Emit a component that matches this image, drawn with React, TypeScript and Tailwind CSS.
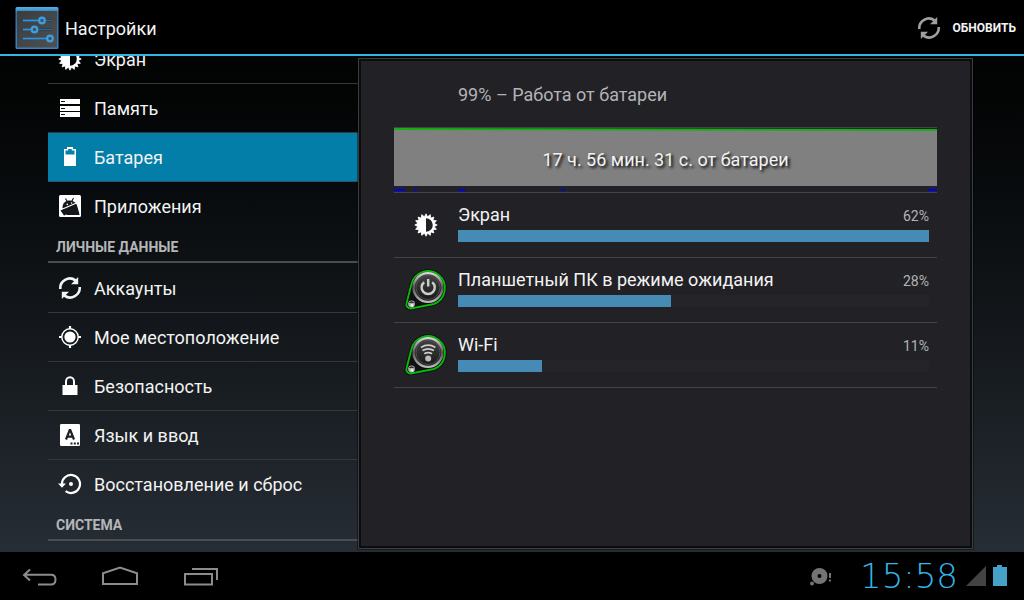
import React from 'react';

type IconProps = { className?: string };

const GEAR_TEETH = Array.from({ length: 16 }, (_, i) => i * 22.5);

const BrightnessIcon: React.FC<IconProps> = ({ className }) => (
    <svg viewBox="0 0 24 24" className={className} fill="none" aria-hidden="true">
        {GEAR_TEETH.map(a => (
            <path key={a} d="M10.6 3.5 L12 0.8 L13.4 3.5 Z" fill="#fff" stroke="#fff" strokeWidth="0.8" transform={`rotate(${a} 12 12)`} />
        ))}
        <circle cx="12" cy="12" r="7.9" stroke="#fff" strokeWidth="2.2" />
        <path d="M12 4 A8 8 0 0 0 12 20 Z" fill="#fff" />
    </svg>
);

const StorageIcon: React.FC<IconProps> = ({ className }) => (
    <svg viewBox="0 0 24 24" className={className} aria-hidden="true">
        {[3, 10, 16].map(y => (
            <g key={y}>
                <rect x="2" y={y} width="20" height="5" fill="#fff" />
                <rect x="3" y={y + 2} width="4" height="1" fill="#111" />
            </g>
        ))}
    </svg>
);

const BatteryIcon: React.FC<IconProps> = ({ className }) => (
    <svg viewBox="0 0 24 24" className={className} aria-hidden="true">
        <path d="M9 2 H15 V4 H18 V21 H6 V4 H9 Z" fill="#fff" />
        <path d="M10.2 4 H13.8 V5.4 H16.5 V9.5 H7.5 V5.4 H10.2 Z" fill="#0480ab" />
    </svg>
);

const AppsIcon: React.FC<IconProps> = ({ className }) => (
    <svg viewBox="0 0 24 24" className={className} fill="none" aria-hidden="true">
        <rect x="1" y="1" width="22" height="22" rx="1.5" fill="#fff" />
        <path d="M4.5 14 C4.5 8.5 8 6.5 11.5 6.5 C15 6.5 18.2 8.5 20 12 L21.5 21 H9 Z" fill="#14161a" />
        <path d="M7.5 4.5 L9.5 8 M15.5 4 L13.7 7.5" stroke="#14161a" strokeWidth="1.1" />
        <path d="M3.5 15.5 L18.5 9 M19 9.5 L22 19" stroke="#fff" strokeWidth="1.2" />
        <path d="M2.5 16.5 L6 21.5 L9.5 20 L6.5 14.8 Z" fill="#14161a" />
        <circle cx="9.3" cy="10.4" r="0.8" fill="#fff" />
        <circle cx="13.6" cy="9" r="0.8" fill="#fff" />
    </svg>
);

const SyncIcon: React.FC<IconProps> = ({ className }) => (
    <svg viewBox="0 0 24 24" className={className} fill="none" aria-hidden="true">
        <path d="M2.3 13 A9.6 9.6 0 0 1 17.5 4.4" stroke="currentColor" strokeWidth="2.6" />
        <path d="M20.2 1 V8.2 H13 Z" fill="currentColor" />
        <path d="M21.7 11 A9.6 9.6 0 0 1 6.5 19.6" stroke="currentColor" strokeWidth="2.6" />
        <path d="M3.8 23 V15.8 H11 Z" fill="currentColor" />
    </svg>
);

const LocationIcon: React.FC<IconProps> = ({ className }) => (
    <svg viewBox="0 0 24 24" className={className} fill="none" aria-hidden="true">
        <circle cx="12" cy="12" r="5.6" fill="#fff" />
        <circle cx="12" cy="12" r="8.2" stroke="#fff" strokeWidth="1.4" />
        <path d="M12 1 V4 M12 20 V23 M1 12 H4 M20 12 H23" stroke="#fff" strokeWidth="2.2" />
    </svg>
);

const LockIcon: React.FC<IconProps> = ({ className }) => (
    <svg viewBox="0 0 24 24" className={className} fill="none" aria-hidden="true">
        <rect x="4.5" y="11" width="15" height="10" fill="#fff" />
        <path d="M8 11.5 V7.5 A4 4.2 0 0 1 16 7.5 V11.5" stroke="#fff" strokeWidth="2" />
    </svg>
);

const LanguageIcon: React.FC<IconProps> = ({ className }) => (
    <svg viewBox="0 0 24 24" className={className} fill="none" aria-hidden="true">
        <rect x="2" y="1" width="20" height="22" rx="1.2" fill="#fff" />
        <path d="M8 16.5 L11.7 7 H12.3 L16 16.5 M9.4 13.6 H14.6" stroke="#1d2024" strokeWidth="2.2" />
        <path d="M12.5 20.5 H14.5 M15.8 20.5 H17.8 M19 20.5 H21" stroke="#1d2024" strokeWidth="1.8" />
    </svg>
);

const RestoreIcon: React.FC<IconProps> = ({ className }) => (
    <svg viewBox="0 0 24 24" className={className} fill="none" aria-hidden="true">
        <path d="M4 12.5 A9 9 0 1 1 7.6 19.2" stroke="#fff" strokeWidth="2.2" />
        <path d="M0 11.4 H8 L4 15.8 Z" fill="#fff" />
        <circle cx="13" cy="12" r="2" fill="#fff" />
    </svg>
);

const SettingsLogo: React.FC<IconProps> = ({ className }) => (
    <svg viewBox="0 0 44 44" className={className} fill="none" aria-hidden="true">
        <defs>
            <linearGradient id="logoFrame" x1="0" y1="0" x2="0" y2="1">
                <stop offset="0" stopColor="#4fb4ea" />
                <stop offset="0.15" stopColor="#3574a5" />
                <stop offset="1" stopColor="#2f86cc" />
            </linearGradient>
            <linearGradient id="logoFace" x1="0" y1="0" x2="1" y2="1">
                <stop offset="0" stopColor="#3a3c3e" />
                <stop offset="1" stopColor="#505050" />
            </linearGradient>
        </defs>
        <rect x="0.5" y="1" width="43" height="42" rx="1.5" fill="url(#logoFrame)" />
        <rect x="2" y="5" width="40" height="36.5" fill="url(#logoFace)" />
        <path d="M8 14.5 H37 M8 23.5 H37 M8 32.5 H37" stroke="#24303a" strokeWidth="2.4" />
        <path d="M8 14.5 H24 M8 23.5 H16 M8 32.5 H32" stroke="#3292dc" strokeWidth="1.8" />
        <path d="M31 14.5 H37 M23 23.5 H37" stroke="#27699c" strokeWidth="1.4" />
        <g fill="#45515b" stroke="#3d9fe0" strokeWidth="2.2">
            <circle cx="27" cy="14.5" r="2.8" />
            <circle cx="19.5" cy="23.5" r="2.8" />
            <circle cx="35" cy="32.5" r="2.8" />
        </g>
    </svg>
);

const Keyring: React.FC<{ children: React.ReactNode }> = ({ children }) => (
    <svg viewBox="0 0 48 48" className="size-12" fill="none" aria-hidden="true">
        <defs>
            <linearGradient id="ringRim" x1="0" y1="0" x2="0" y2="1">
                <stop offset="0" stopColor="#d8d8d8" />
                <stop offset="0.5" stopColor="#555" />
                <stop offset="1" stopColor="#bbb" />
            </linearGradient>
            <linearGradient id="ringFace" x1="0" y1="0" x2="0" y2="1">
                <stop offset="0" stopColor="#444" />
                <stop offset="1" stopColor="#161616" />
            </linearGradient>
        </defs>
        <path d="M9.2 19 A17 17 0 1 1 32 38 L9 42.5 A4 4 0 0 1 4.5 37.5 Z" fill="#111" stroke="#0a0a0a" strokeWidth="3.5" />
        <path d="M9.2 19 A17 17 0 1 1 32 38 L9 42.5 A4 4 0 0 1 4.5 37.5 Z" stroke="#08b80c" strokeWidth="1.9" />
        <circle cx="26" cy="21.5" r="14.4" fill="url(#ringFace)" stroke="url(#ringRim)" strokeWidth="2.4" />
        <circle cx="26" cy="21.5" r="12" stroke="#555" strokeWidth="0.8" />
        <circle cx="9.5" cy="38" r="3.4" fill="#aaa" />
        <path d="M6.8 37 A3 3 0 0 1 12.2 37 Z" fill="#333" />
        <circle cx="10" cy="39.3" r="1.5" fill="#eee" />
        {children}
    </svg>
);

const StandbyIcon = () => (
    <Keyring>
        <path d="M22.2 16.2 A6.6 6.6 0 1 0 30.2 16.2" stroke="#ccc" strokeWidth="2.4" />
        <path d="M26.2 13 V20.5" stroke="#ccc" strokeWidth="2.4" />
    </Keyring>
);

const WifiIcon = () => (
    <Keyring>
        <circle cx="26.2" cy="27.5" r="3" fill="#bbb" />
        <path d="M22.3 22.8 Q26.2 20.6 30.1 22.8 M20.5 19.6 Q26.2 16.2 31.9 19.6 M19 16.4 Q26.2 12 33.4 16.4" stroke="#ccc" strokeWidth="1.8" />
    </Keyring>
);

const ROW = 'flex h-[49px] w-full items-center gap-3 border-b pl-[10px] text-left text-lg';

const MENU = [
    { label: 'Экран', Icon: BrightnessIcon },
    { label: 'Память', Icon: StorageIcon },
    { label: 'Батарея', Icon: BatteryIcon, active: true },
    { label: 'Приложения', Icon: AppsIcon, last: true },
    { label: 'ЛИЧНЫЕ ДАННЫЕ', header: true },
    { label: 'Аккаунты', Icon: SyncIcon },
    { label: 'Мое местоположение', Icon: LocationIcon },
    { label: 'Безопасность', Icon: LockIcon },
    { label: 'Язык и ввод', Icon: LanguageIcon },
    { label: 'Восстановление и сброс', Icon: RestoreIcon, last: true },
    { label: 'СИСТЕМА', header: true },
];

const USAGE = [
    { label: 'Экран', percent: 62, icon: <BrightnessIcon className="size-6" /> },
    { label: 'Планшетный ПК в режиме ожидания', percent: 28, icon: <StandbyIcon /> },
    { label: 'Wi-Fi', percent: 11, icon: <WifiIcon /> },
];

const MAX_PERCENT = 62;

const Sidebar = () => (
    <nav className="w-[310px] shrink-0 overflow-hidden">
        {/* list is scrolled part way into its first row */}
        <ul className="-mt-[21px]">
            {MENU.map(({ label, Icon, header, active, last }) => (
                <li key={label}>
                    {header || !Icon ? (
                        <h2 className="mb-px flex h-8 items-center border-b-2 border-[#4a4e51] pt-0.5 pl-2 text-sm font-bold text-[#b4b6b8]">{label}</h2>
                    ) : (
                        <button
                            className={`${ROW} ${active ? 'border-[#22586b] bg-[#027ea9]' : last ? 'border-transparent' : 'border-[#35383a]'}`}
                        >
                            <Icon className="size-6 shrink-0" />
                            <span className="pt-0.5">{label}</span>
                        </button>
                    )}
                </li>
            ))}
        </ul>
    </nav>
);

const BatteryPanel = () => (
    <main className="mt-[2px] mr-[51px] mb-[3px] min-w-0 flex-1 border border-[#3a3d40] bg-[#222126] outline-1 outline-black/40">
        <div className="h-full border-2 border-[#0c0c0e] px-[33px] pt-px">
            <p className="flex h-[66px] items-center border-b border-[#434246] pl-16 text-lg text-[#b4b4b6]">99% – Работа от батареи</p>
            <div className="flex h-[65px] flex-col border-b border-[#434246]">
                <div className="grid h-[58px] bg-[#808080]">
                    <svg viewBox="0 0 542 58" preserveAspectRatio="none" className="col-start-1 row-start-1 h-[58px] w-full" aria-hidden="true">
                        <path d="M0 0 H542 V2 L0 1 Z" fill="#222126" />
                        <path d="M0 1 L542 2" stroke="#14b014" strokeWidth="2" fill="none" />
                    </svg>
                    <p className="col-start-1 row-start-1 self-center pt-1.5 text-center text-lg [text-shadow:2px_2px_3px_#000]">17 ч. 56 мин. 31 с. от батареи</p>
                </div>
                <svg viewBox="0 0 542 6" preserveAspectRatio="none" className="h-[6px] w-full" aria-hidden="true">
                    <path d="M0 4 H11 M20 4 H23 M64 4 H71 M167 4 H170 M533 4 H542" stroke="#0000f0" strokeWidth="2" />
                </svg>
            </div>
            <ul>
                {USAGE.map(u => (
                    <li key={u.label} className="flex h-[65px] items-center border-b border-[#434246] pr-2">
                        <div className="flex w-16 shrink-0 justify-center">{u.icon}</div>
                        <div className="flex-1 pb-2">
                            <div className="flex items-center justify-between">
                                <span className="text-lg">{u.label}</span>
                                <span className="pt-0.5 text-sm text-[#b4b4b6]">{u.percent}%</span>
                            </div>
                            <div className="mt-px h-3 bg-[#252428]">
                                <div className="h-full bg-[#468ab6]" style={{ width: `${(u.percent / MAX_PERCENT) * 100}%` }} />
                            </div>
                        </div>
                    </li>
                ))}
            </ul>
        </div>
    </main>
);

const SystemBar = () => (
    <footer className="flex h-12 shrink-0 items-center justify-between bg-black pr-[14px] pl-5">
        <div className="flex items-center gap-10 pb-0.5 text-[#8c8c8c]">
            <button aria-label="Назад">
                <svg viewBox="0 0 40 40" className="size-10" fill="none" stroke="currentColor" strokeWidth="2" aria-hidden="true">
                    <path d="M10 14.5 L4 20 L10 25.5 M4.5 19.8 H31 Q35.5 19.8 35.5 24.5 Q35.5 29.5 31 29.5 H18" />
                </svg>
            </button>
            <button aria-label="Домой">
                <svg viewBox="0 0 40 40" className="size-10" fill="none" stroke="currentColor" strokeWidth="2" aria-hidden="true">
                    <path d="M3 29 V18.2 L20 12.5 L37 18.2 V29 Z" />
                </svg>
            </button>
            <button aria-label="Недавние">
                <svg viewBox="0 0 40 40" className="size-10" fill="none" stroke="currentColor" strokeWidth="2" aria-hidden="true">
                    <path d="M5 19 H32 V29.5 H5 Z M12 14 H37 V25" />
                </svg>
            </button>
        </div>
        <div className="flex items-center">
            <svg viewBox="0 0 24 24" className="mr-7 size-6" aria-hidden="true">
                <circle cx="11.5" cy="12" r="5" fill="none" stroke="#747474" strokeWidth="6" />
                <circle cx="4" cy="19.5" r="2" fill="#747474" />
                <path d="M21 9 H23 V14 H21 Z M21 15.5 H23 V17.5 H21 Z" fill="#747474" />
            </svg>
            <time className="mr-2 font-['DejaVu_Sans',sans-serif] text-[34px] leading-8 font-extralight text-[#33b5e5]">15:58</time>
            <svg viewBox="0 0 44 24" className="h-6 w-11" aria-hidden="true">
                <path d="M0 22 L20 2 V22 Z" fill="#434343" />
                <path d="M27 3 H31 V1 H36 V3 H41 V22 H27 Z" fill="#45a1c8" />
            </svg>
        </div>
    </footer>
);

export default function App() {
    return (
        <div className="flex h-screen flex-col overflow-hidden bg-black font-[Roboto,sans-serif] text-[#f3f3f3]">
            <header className="flex h-14 shrink-0 items-center justify-between border-b-2 border-[#33b5e5] bg-black pt-0.5 pr-2 pl-[15px]">
                <div className="flex items-center gap-[6px]">
                    <SettingsLogo className="size-11" />
                    <h1 className="pt-0.5 text-lg">Настройки</h1>
                </div>
                <button className="flex items-center gap-3 text-xs font-bold">
                    <SyncIcon className="size-6 text-[#a0a0a0]" />
                    ОБНОВИТЬ
                </button>
            </header>
            <div className="flex min-h-0 flex-1 bg-linear-to-b from-[#020303] to-[#272d35] pl-12">
                <Sidebar />
                <BatteryPanel />
            </div>
            <SystemBar />
        </div>
    );
}
